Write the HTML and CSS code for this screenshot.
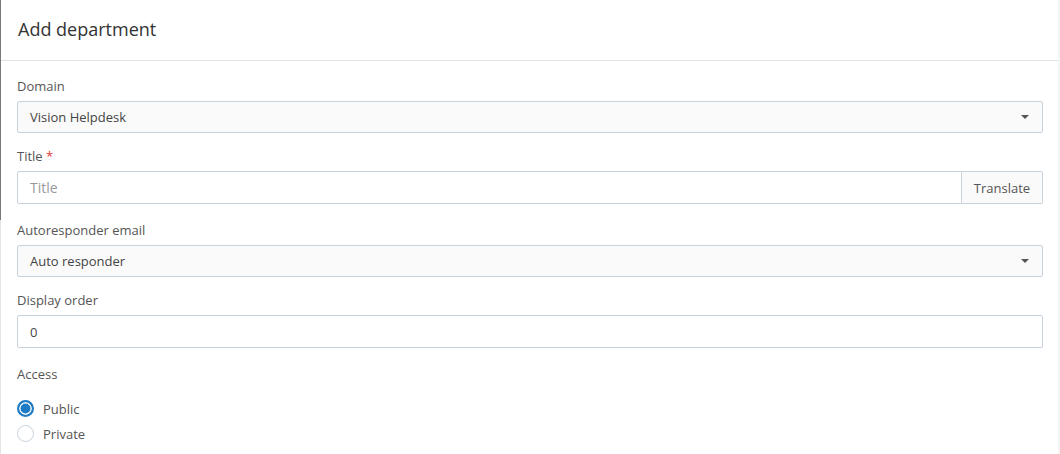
FILE: index.html
```html
<!DOCTYPE html>
<html>
<head>
  <title>Add department</title>
  <link rel="stylesheet" href="styles.css">
</head>
<body>
  <div class="page">
    <div class="edge"><div class="edge-thumb"></div></div>
    <div class="panel">
      <div class="panel-header">
        <h1>Add department</h1>
      </div>
      <form class="panel-body">
        <div class="field">
          <label>Domain</label>
          <div class="select">
            <span>Vision Helpdesk</span>
            <span class="caret"></span>
          </div>
        </div>

        <div class="field field-wide">
          <label>Title <span class="req">*</span></label>
          <div class="input-group">
            <input type="text" class="input" placeholder="Title">
            <button type="button" class="addon">Translate</button>
          </div>
        </div>

        <div class="field">
          <label>Autoresponder email</label>
          <div class="select">
            <span>Auto responder</span>
            <span class="caret"></span>
          </div>
        </div>

        <div class="field field-wide">
          <label>Display order</label>
          <input type="text" class="input" value="0">
        </div>

        <div class="field">
          <label>Access</label>
          <div class="radios">
            <div class="radio checked"><span class="dot"></span>Public</div>
            <div class="radio"><span class="dot"></span>Private</div>
          </div>
        </div>
      </form>
    </div>
  </div>
</body>
</html>
```

FILE: styles.css
```css
body {
  margin: 0;
  padding: 0;
  background-color: #F4F5F7;
  font-family: "Open Sans", Arial, sans-serif;
  font-size: 13px;
  color: #555555;
}

.page {
  display: flex;
  width: 1058px;
  height: 454px;
  background-color: #FFFFFF;
  overflow: hidden;
}

.edge {
  width: 1px;
  background-color: #E4E4E4;
  flex-shrink: 0;
}

.edge-thumb {
  height: 220px;
  background-color: #7A7A7A;
}

.panel {
  flex: 1;
}

.panel-header {
  height: 60px;
  border-bottom: 1px solid #DFE4EA;
  display: flex;
  align-items: center;
  padding-left: 17px;
}

.panel-header h1 {
  margin: 0;
  font-size: 18px;
  font-weight: normal;
  color: #333333;
  margin-top: -3px;
}

.panel-body {
  padding: 16px 15px 0 16px;
}

.field {
  margin-bottom: 14px;
}

.field-wide {
  margin-bottom: 17px;
}

label {
  display: block;
  line-height: 18px;
  margin-bottom: 6px;
  color: #555555;
}

.req {
  color: #E53935;
}

.select {
  height: 32px;
  box-sizing: border-box;
  border: 1px solid #C8D2DC;
  border-radius: 2px;
  background-color: #FAFAFA;
  display: flex;
  align-items: center;
  justify-content: space-between;
  padding: 0 12px;
  color: #444444;
}

.caret {
  width: 0;
  height: 0;
  border-left: 4px solid transparent;
  border-right: 4px solid transparent;
  border-top: 4px solid #555555;
  margin-right: 1px;
}

.input {
  width: 100%;
  height: 33px;
  box-sizing: border-box;
  border: 1px solid #C8D2DC;
  border-radius: 2px;
  padding: 0 12px;
  font-family: "Open Sans", Arial, sans-serif;
  font-size: 13px;
  color: #444444;
  background-color: #FFFFFF;
  outline: none;
}

.input::placeholder {
  color: #999999;
  font-size: 14px;
}

.input-group {
  display: flex;
}

.input-group .input {
  flex: 1;
  border-radius: 2px 0 0 2px;
}

.addon {
  width: 81px;
  height: 33px;
  border: 1px solid #C8D2DC;
  border-left: none;
  border-radius: 0 2px 2px 0;
  background-color: #FAFAFA;
  font-family: "Open Sans", Arial, sans-serif;
  font-size: 13px;
  color: #555555;
  padding: 0;
}

.radios {
  padding-top: 7px;
}

.radio {
  display: flex;
  align-items: center;
  height: 25px;
  color: #555555;
}

.dot {
  width: 15px;
  height: 15px;
  border: 1px solid #C8D2DC;
  border-radius: 50%;
  margin-right: 9px;
  box-sizing: content-box;
}

.radio.checked .dot {
  width: 13px;
  height: 13px;
  border: 2px solid #1E7BC4;
  background-color: #1E7BC4;
  box-shadow: inset 0 0 0 1.5px #FFFFFF;
}
```
